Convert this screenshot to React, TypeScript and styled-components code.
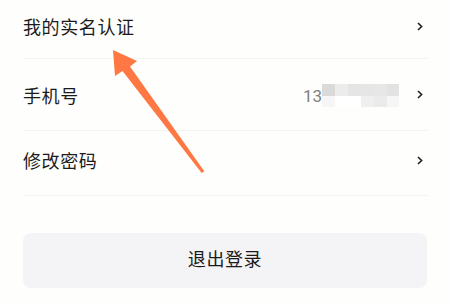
import React from 'react';
import styled, { createGlobalStyle } from 'styled-components';

const GlobalStyle = createGlobalStyle`
  html, body {
    margin: 0;
    padding: 0;
    background: #fefefc;
  }
  body {
    font-family: "Noto Sans CJK SC", "Noto Sans", sans-serif;
    color: #1b1b1b;
  }
`;

const Page = styled.div`
  position: relative;
  width: 450px;
  height: 304px;
  overflow: hidden;
  padding: 0 23px;
  box-sizing: border-box;
`;

const List = styled.div`
  display: flex;
  flex-direction: column;
`;

const Row = styled.div<{ $h: number; $shift?: number }>`
  display: flex;
  align-items: center;
  height: ${(p) => p.$h}px;
  padding-top: ${(p) => p.$shift ?? 0}px;
  padding-bottom: 6px;
  box-sizing: border-box;
  border-bottom: 1px solid #f2f2f1;
`;

const Label = styled.span`
  flex: 1;
  font-size: 18px;
  line-height: 1;
  letter-spacing: 0.6px;
`;

const Value = styled.div`
  display: flex;
  align-items: center;
  margin-right: 18px;
`;

const Digits = styled.span`
  font-family: Roboto, "Liberation Sans", sans-serif;
  font-size: 17px;
  color: #808080;
  line-height: 1;
  margin-top: 3px;
`;

const Mosaic = styled.div`
  display: grid;
  grid-template-columns: 13px 13px 13px 13px 13px 12px;
  grid-template-rows: 12px 11px;
  margin-top: 1px;
`;

const Tile = styled.div<{ $c: string }>`
  background: ${(p) => p.$c};
`;

const Chevron = styled.svg`
  width: 6px;
  height: 9px;
  margin-right: 4px;
  flex-shrink: 0;
`;

const LogoutButton = styled.div`
  margin-top: 37px;
  height: 55px;
  padding-bottom: 5px;
  box-sizing: border-box;
  border-radius: 8px;
  background: #f4f4f6;
  display: flex;
  align-items: center;
  justify-content: center;
  font-size: 18px;
  letter-spacing: 0.6px;
  color: #1b1b1b;
`;

const Annotation = styled.svg`
  position: absolute;
  left: 0;
  top: 0;
  width: 450px;
  height: 304px;
  pointer-events: none;
`;

const tiles = [
  '#dadada', '#ececec', '#e5e5e5', '#e6e6e6', '#e7e7e7', '#e2e2e2',
  '#f6f6f6', '#ffffff', '#ffffff', '#efefef', '#ebebeb', '#f6f6f6',
];

const Arrow = () => (
  <Chevron viewBox="0 0 6 9">
    <path d="M1 1l3.6 3.5L1 8" fill="none" stroke="#1f1f1f" strokeWidth="1.6" />
  </Chevron>
);

const App = () => (
  <>
    <GlobalStyle />
    <Page>
      <List>
        <Row $h={59}>
          <Label>我的实名认证</Label>
          <Arrow />
        </Row>
        <Row $h={72} $shift={6}>
          <Label>手机号</Label>
          <Value>
            <Digits>13</Digits>
            <Mosaic>
              {tiles.map((c, i) => (
                <Tile key={i} $c={c} />
              ))}
            </Mosaic>
          </Value>
          <Arrow />
        </Row>
        <Row $h={65}>
          <Label>修改密码</Label>
          <Arrow />
        </Row>
      </List>
      <LogoutButton>退出登录</LogoutButton>
      <Annotation viewBox="0 0 450 304">
        <polygon
          points="113,50 137,61 130,66.5 204.3,171.2 201.7,173 122.5,71 115,76"
          fill="#ff7743"
        />
      </Annotation>
    </Page>
  </>
);

export default App;
